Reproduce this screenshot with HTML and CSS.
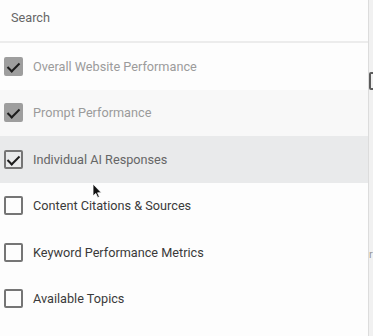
FILE: index.html
```html
<html>
  <head>
    <link rel="stylesheet" href="styles.css">
    <title>Columns</title>
  </head>
  <body>
    <div id="page">
      <div id="panel">
        <div id="search">Search</div>
        <div class="option disabled">
          <span class="box checked"></span>Overall Website Performance
        </div>
        <div class="option disabled soft">
          <span class="box checked"></span>Prompt Performance
        </div>
        <div class="option hover">
          <span class="box ticked"></span>Individual AI Responses
        </div>
        <div class="option"><span class="box"></span>Content Citations &amp; Sources</div>
        <div class="option"><span class="box"></span>Keyword Performance Metrics</div>
        <div class="option"><span class="box"></span>Available Topics</div>
      </div>
      <div id="behind">
        <div class="edgeBox"></div>
        <div class="edgeText">r</div>
      </div>
    </div>
    <svg id="cursor" width="12" height="16" viewBox="0 0 12 16">
      <path d="M1 1 L1 13 L3.8 10.4 L5.7 14.6 L7.4 13.8 L5.6 9.8 L9.4 9.8 Z" fill="#111" stroke="#fff" stroke-width="0.8"/>
    </svg>
  </body>
</html>
```

FILE: styles.css
```css
* {
  margin: 0;
  padding: 0;
  box-sizing: border-box;
}
body {
  background: #f1f1f1;
  font-family: Roboto, "Liberation Sans", sans-serif;
  font-size: 12.7px;
  overflow: hidden;
}
#page {
  display: flex;
  height: 336px;
}
#panel {
  width: 369px;
  flex-shrink: 0;
  background: #fdfdfd;
  border-right: 1px solid #dcdcdc;
}
#search {
  height: 43px;
  padding: 10px 11px 0;
  color: #666;
  border-bottom: 2px solid #ececec;
}
.option {
  height: 46.5px;
  display: flex;
  align-items: center;
  padding-left: 4px;
  color: #3a3a3a;
}
.option.soft {
  background: #f8f8f8;
}
.option.disabled {
  color: #9b9b9b;
}
.option.hover {
  background: #e9eaeb;
  color: #666;
}
.box {
  width: 19px;
  height: 19px;
  border: 2px solid #757575;
  border-radius: 2px;
  margin-right: 10px;
  position: relative;
}
.box.checked {
  background: #9e9e9e;
  border-color: #9e9e9e;
}
.box.checked::after,
.box.ticked::after {
  content: "";
  position: absolute;
  left: 4px;
  top: 1px;
  width: 5px;
  height: 10px;
  border-right: 2px solid #1c1c1c;
  border-bottom: 2px solid #1c1c1c;
  transform: rotate(45deg);
}
#behind {
  flex: 1;
  overflow: hidden;
  padding-top: 72px;
}
.edgeBox {
  width: 10px;
  height: 18px;
  border: 2px solid #5c5c5c;
  border-radius: 2px;
}
.edgeText {
  margin-top: 158px;
  color: #999;
  font-size: 11px;
}
#cursor {
  position: absolute;
  left: 92px;
  top: 183px;
}
```
